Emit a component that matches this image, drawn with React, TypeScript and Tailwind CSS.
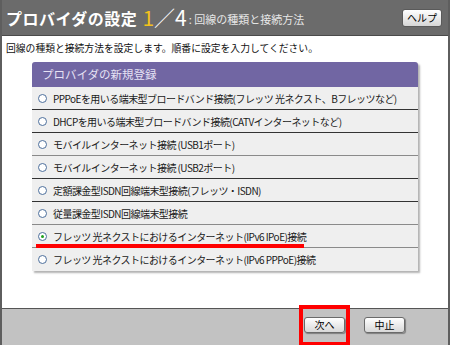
const options = [
  { label: "PPPoEを用いる端末型ブロードバンド接続(フレッツ 光ネクスト、Bフレッツなど)", line: "border-[#333]" },
  { label: "DHCPを用いる端末型ブロードバンド接続(CATVインターネットなど)", line: "border-[#333]" },
  { label: "モバイルインターネット接続 (USB1ポート)", line: "border-[#8a8a8a]" },
  { label: "モバイルインターネット接続 (USB2ポート)", line: "border-[#333]" },
  { label: "定額課金型ISDN回線端末型接続(フレッツ・ISDN)", line: "border-[#333]" },
  { label: "従量課金型ISDN回線端末型接続", line: "border-[#8a8a8a]" },
  { label: "フレッツ 光ネクストにおけるインターネット(IPv6 IPoE)接続", line: "border-[#8a8a8a]", checked: true },
  { label: "フレッツ 光ネクストにおけるインターネット(IPv6 PPPoE)接続", line: "border-transparent" },
]

const Radio = ({ checked }: { checked?: boolean }) => (
  <span className="flex items-center justify-center w-[9px] h-[9px] rounded-full border border-[#4d6f9c] bg-white shrink-0">
    {checked && <span className="w-[3px] h-[3px] rounded-full bg-[#1ea01e]" />}
  </span>
)

const Btn = ({ children }: { children: React.ReactNode }) => (
  <button className="w-[41px] h-[16px] rounded-[3px] border border-[#6a6a6a] bg-gradient-to-b from-white to-[#d8d8d8] shadow-[1px_1px_1px_rgba(0,0,0,0.35)] text-[10px] leading-none text-black flex items-center justify-center">
    {children}
  </button>
)

export default function App() {
  return (
    <div
      className="w-[450px] h-[345px] flex flex-col border-x-2 border-[#5e5e5e] bg-white overflow-hidden"
      style={{ fontFamily: '"Noto Sans CJK JP", "Noto Sans", sans-serif' }}
    >
      <header className="h-[36px] bg-[#6b6b6b] border-b border-[#4a4a4a] flex items-center pl-[4px] pr-[4px] shrink-0">
        <span className="text-white font-bold text-[16px] tracking-[0.5px]">プロバイダの設定</span>
        <span className="ml-[5px] text-[#f2c21b] text-[21px] leading-none">1</span>
        <span className="text-white text-[21px] leading-none">／4</span>
        <span className="ml-[2px] mt-[3px] text-[#e6e6e6] text-[11px]">: 回線の種類と接続方法</span>
        <button className="ml-auto mr-[2px] w-[40px] h-[18px] rounded-[3px] border border-[#5a5a5a] bg-gradient-to-b from-white to-[#d6d6d6] text-[10px] leading-none text-black flex items-center justify-center">
          ヘルプ
        </button>
      </header>

      <main className="flex-1 flex flex-col">
        <p className="pl-[4px] pt-[5px] text-[9.8px] text-[#111] leading-[14px]">
          回線の種類と接続方法を設定します。順番に設定を入力してください。
        </p>
        <div className="ml-[30px] mt-[7px] w-[386px] rounded-t-[3px] bg-[#efefef] shadow-[2px_2px_2px_rgba(0,0,0,0.3)]">
          <div className="h-[25px] bg-[#7166a3] rounded-t-[3px] flex items-center pl-[10px] text-[11.5px] text-[#e6e2f4]">
            プロバイダの新規登録
          </div>
          {options.map((o) => (
            <div
              key={o.label}
              className={`relative h-[23px] flex items-center gap-[6px] pl-[6px] border-b ${o.line} text-[10px] tracking-[-0.55px] text-[#1a1a1a] whitespace-nowrap`}
            >
              <Radio checked={o.checked} />
              <span>{o.label}</span>
              {o.checked && <div className="absolute left-[4px] bottom-[-1px] w-[268px] h-[4px] bg-[#ff0000]" />}
            </div>
          ))}
        </div>
      </main>

      <footer className="h-[37px] shrink-0 bg-[#c2c2c2] border-t border-[#555] flex justify-end items-start pt-[8px] pr-[43px] gap-[19px]">
        <div className="relative">
          <Btn>次へ</Btn>
          <div className="absolute left-[-5px] right-[-5px] top-[-12px] bottom-[-13px] border-4 border-[#ff0000]" />
        </div>
        <Btn>中止</Btn>
      </footer>
    </div>
  )
}
